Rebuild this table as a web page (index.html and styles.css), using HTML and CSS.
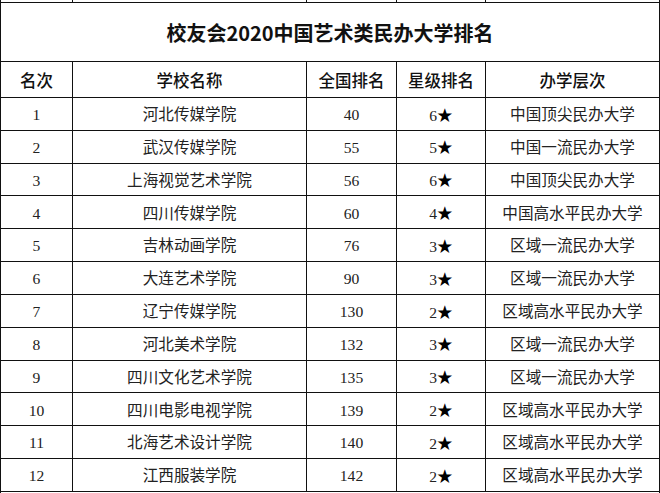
FILE: index.html
```html
<!DOCTYPE html>
<html lang="zh-CN">
<head>
<meta charset="utf-8">
<title>校友会2020中国艺术类民办大学排名</title>
<link rel="stylesheet" href="styles.css">
</head>
<body>
<table class="rank">
  <colgroup>
    <col class="c1"><col class="c2"><col class="c3"><col class="c4"><col class="c5">
  </colgroup>
  <tr class="cut-top"><td></td><td></td><td></td><td></td><td></td></tr>
  <tr class="title"><td colspan="5">校友会2020中国艺术类民办大学排名</td></tr>
  <tr class="head"><th>名次</th><th>学校名称</th><th>全国排名</th><th>星级排名</th><th>办学层次</th></tr>
  <tr class="row"><td>1</td><td>河北传媒学院</td><td>40</td><td>6<span class="star">★</span></td><td>中国顶尖民办大学</td></tr>
  <tr class="row"><td>2</td><td>武汉传媒学院</td><td>55</td><td>5<span class="star">★</span></td><td>中国一流民办大学</td></tr>
  <tr class="row"><td>3</td><td>上海视觉艺术学院</td><td>56</td><td>6<span class="star">★</span></td><td>中国顶尖民办大学</td></tr>
  <tr class="row"><td>4</td><td>四川传媒学院</td><td>60</td><td>4<span class="star">★</span></td><td>中国高水平民办大学</td></tr>
  <tr class="row"><td>5</td><td>吉林动画学院</td><td>76</td><td>3<span class="star">★</span></td><td>区域一流民办大学</td></tr>
  <tr class="row"><td>6</td><td>大连艺术学院</td><td>90</td><td>3<span class="star">★</span></td><td>区域一流民办大学</td></tr>
  <tr class="row"><td>7</td><td>辽宁传媒学院</td><td>130</td><td>2<span class="star">★</span></td><td>区域高水平民办大学</td></tr>
  <tr class="row"><td>8</td><td>河北美术学院</td><td>132</td><td>3<span class="star">★</span></td><td>区域一流民办大学</td></tr>
  <tr class="row"><td>9</td><td>四川文化艺术学院</td><td>135</td><td>3<span class="star">★</span></td><td>区域一流民办大学</td></tr>
  <tr class="row"><td>10</td><td>四川电影电视学院</td><td>139</td><td>2<span class="star">★</span></td><td>区域高水平民办大学</td></tr>
  <tr class="row"><td>11</td><td>北海艺术设计学院</td><td>140</td><td>2<span class="star">★</span></td><td>区域高水平民办大学</td></tr>
  <tr class="row"><td>12</td><td>江西服装学院</td><td>142</td><td>2<span class="star">★</span></td><td>区域高水平民办大学</td></tr>
  <tr class="cut-bottom"><td colspan="5"></td></tr>
</table>
</body>
</html>
```

FILE: styles.css
```css
html, body {
  margin: 0;
  padding: 0;
  background: #fff;
}

body {
  width: 660px;
  height: 493px;
  overflow: hidden;
}

.rank {
  border-collapse: collapse;
  table-layout: fixed;
  width: 659px;
  font-family: "Liberation Serif", "Noto Sans CJK SC", serif;
  color: #222;
}

.c1 { width: 72px; }
.c2 { width: 234px; }
.c3 { width: 90px; }
.c4 { width: 89px; }
.c5 { width: 174px; }

.rank td,
.rank th {
  border: 1px solid #111;
  padding: 0;
  text-align: center;
  vertical-align: middle;
}

.cut-top td {
  border-top: none;
  height: 2px;
}

.title td {
  height: 58px;
  font-family: "Noto Sans CJK SC", sans-serif;
  font-weight: 700;
  font-size: 20px;
  color: #111;
}

.head th {
  height: 35px;
  font-family: "Noto Sans CJK SC", sans-serif;
  font-weight: 500;
  font-size: 16.5px;
  color: #111;
}

.row td {
  height: 29.84px;
  font-size: 15.6px;
  line-height: 1;
  padding-top: 2px;
}

.star {
  font-family: "Noto Sans CJK SC", sans-serif;
  color: #000;
}

.cut-bottom td {
  border-bottom: none;
  height: 4px;
}
```
